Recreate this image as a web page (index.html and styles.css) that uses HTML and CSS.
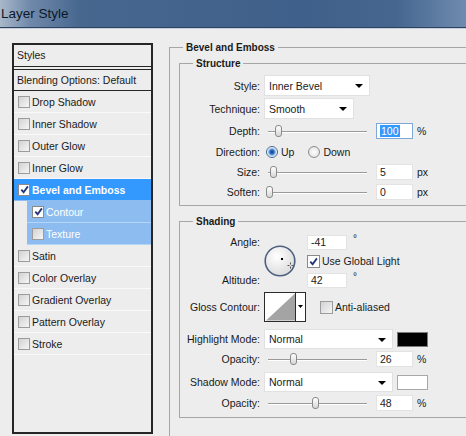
FILE: index.html
```html
<!DOCTYPE html>
<html lang="en">
<head>
<meta charset="utf-8" />
<title>Layer Style</title>
<link rel="stylesheet" href="styles.css">
</head>
<body>
  <div class="titlebar">Layer Style</div>

  <div class="dialog">
    <!-- left list of effects -->
    <div class="styles-panel">
      <div class="panel-head">Styles</div>
      <ul class="style-list">
        <li class="blend">Blending Options: Default</li>
        <li><span class="check"></span>Drop Shadow</li>
        <li><span class="check"></span>Inner Shadow</li>
        <li><span class="check"></span>Outer Glow</li>
        <li><span class="check"></span>Inner Glow</li>
        <li class="active"><span class="check on"><svg width="9" height="9" viewBox="0 0 9 9"><path d="M1.3 4.6 L3.6 7.2 L7.9 1.4" fill="none" stroke="#24367a" stroke-width="1.8"/></svg></span>Bevel and Emboss</li>
        <li class="sub"><span class="check on"><svg width="9" height="9" viewBox="0 0 9 9"><path d="M1.3 4.6 L3.6 7.2 L7.9 1.4" fill="none" stroke="#24367a" stroke-width="1.8"/></svg></span>Contour</li>
        <li class="sub"><span class="check"></span>Texture</li>
        <li><span class="check"></span>Satin</li>
        <li><span class="check"></span>Color Overlay</li>
        <li><span class="check"></span>Gradient Overlay</li>
        <li><span class="check"></span>Pattern Overlay</li>
        <li><span class="check"></span>Stroke</li>
      </ul>
    </div>

    <!-- settings of the selected effect -->
    <div class="settings">
      <fieldset class="group outer">
        <legend>Bevel and Emboss</legend>

        <fieldset class="group structure">
          <legend>Structure</legend>
          <div class="row h23">
            <span class="label">Style:</span>
            <div class="select w-style">Inner Bevel<i class="arrow"></i></div>
          </div>
          <div class="row h23">
            <span class="label">Technique:</span>
            <div class="select w-tech">Smooth<i class="arrow"></i></div>
          </div>
          <div class="row h22">
            <span class="label">Depth:</span>
            <div class="slider"><span class="thumb" style="left:10px"></span></div>
            <div class="num focus"><span class="sel">100</span></div>
            <span class="unit">%</span>
          </div>
          <div class="row h20">
            <span class="label">Direction:</span>
            <span class="radio on"></span><span class="radio-text">Up</span>
            <span class="radio second"></span><span class="radio-text">Down</span>
          </div>
          <div class="row h20">
            <span class="label">Size:</span>
            <div class="slider"><span class="thumb" style="left:5px"></span></div>
            <div class="num">5</div>
            <span class="unit">px</span>
          </div>
          <div class="row h20">
            <span class="label">Soften:</span>
            <div class="slider"><span class="thumb" style="left:1px"></span></div>
            <div class="num">0</div>
            <span class="unit">px</span>
          </div>
        </fieldset>

        <fieldset class="group shading">
          <legend>Shading</legend>
          <div class="angle-grid">
            <span class="label a-angle">Angle:</span>
            <svg class="dial" width="32" height="32" viewBox="0 0 32 32">
              <defs>
                <radialGradient id="dialFill" cx="40%" cy="35%" r="70%">
                  <stop offset="0" stop-color="#ffffff"/>
                  <stop offset="1" stop-color="#dadada"/>
                </radialGradient>
              </defs>
              <circle cx="16" cy="16" r="14.8" fill="url(#dialFill)" stroke="#4e5f80" stroke-width="1.6"/>
              <rect x="17" y="13" width="2" height="2" fill="#000"/>
              <path d="M23.5 20.5h2 M27.5 20.5h2 M26.5 17.5v2 M26.5 21.5v2" stroke="#555" stroke-width="1"/>
            </svg>
            <div class="field a-angle-val"><div class="num short">-41</div><span class="deg">°</span></div>
            <div class="field a-global"><span class="check on"><svg width="9" height="9" viewBox="0 0 9 9"><path d="M1.3 4.6 L3.6 7.2 L7.9 1.4" fill="none" stroke="#24367a" stroke-width="1.8"/></svg></span>Use Global Light</div>
            <span class="label a-alt">Altitude:</span>
            <div class="field a-alt-val"><div class="num short">42</div><span class="deg">°</span></div>
          </div>

          <div class="row gloss">
            <span class="label">Gloss Contour:</span>
            <svg class="contour" width="42" height="30" viewBox="0 0 42 30">
              <rect x="0.5" y="0.5" width="41" height="29" fill="#fff" stroke="#2b2b2b"/>
              <polygon points="2,28.5 31,1.5 31,28.5" fill="#a4a4a4"/>
              <line x1="31.5" y1="1" x2="31.5" y2="29" stroke="#2b2b2b"/>
              <polygon points="34,13 39,13 36.5,16" fill="#000"/>
            </svg>
            <span class="check aa"></span><span>Anti-aliased</span>
          </div>

          <div class="row h22 mode-hi">
            <span class="label">Highlight Mode:</span>
            <div class="select w-mode">Normal<i class="arrow"></i></div>
            <span class="swatch black"></span>
          </div>
          <div class="row h18">
            <span class="label">Opacity:</span>
            <div class="slider"><span class="thumb" style="left:25px"></span></div>
            <div class="num">26</div>
            <span class="unit">%</span>
          </div>
          <div class="row h22 mode-sh">
            <span class="label">Shadow Mode:</span>
            <div class="select w-mode">Normal<i class="arrow"></i></div>
            <span class="swatch white"></span>
          </div>
          <div class="row h18 last">
            <span class="label">Opacity:</span>
            <div class="slider"><span class="thumb" style="left:47px"></span></div>
            <div class="num">48</div>
            <span class="unit">%</span>
          </div>
        </fieldset>
      </fieldset>
    </div>
  </div>
</body>
</html>
```

FILE: styles.css
```css
* {
  box-sizing: border-box;
}

html,
body {
  margin: 0;
  height: 100%;
}

body {
  background: #ededed;
  font-family: "Liberation Sans", Arial, sans-serif;
  font-size: 10.5px;
  color: #1a1a1a;
  overflow: hidden;
}

.titlebar {
  height: 29px;
  padding-left: 1px;
  font-size: 13.5px;
  line-height: 27px;
  color: #0d1726;
  background: linear-gradient(to right, #a9b8ca 0, #7089aa 30px, #47678f 80px, #3f608a 65%, #46668f 85%, #6f8baf 100%);
  border-bottom: 1px solid #c6d0dc;
  box-shadow: inset 0 -1px 0 #2d4260;
}

/* the dialog is cropped on the right and bottom */
.dialog {
  display: flex;
  align-items: flex-start;
  height: calc(100% - 29px);
  overflow: hidden;
}

/* left list */
.styles-panel {
  flex: none;
  width: 141px;
  height: 391px;
  margin: 14px 0 0 12px;
  border: 2px solid #262626;
}

.panel-head {
  height: 22px;
  line-height: 20px;
  padding-left: 3px;
  border-bottom: 1px solid #262626;
}

.style-list {
  list-style: none;
  margin: 2px 0 0;
  padding: 0;
  border-top: 1px solid #262626;
}

.style-list li {
  display: flex;
  align-items: center;
  height: 22px;
  padding-left: 4px;
  border-bottom: 1px solid #f9f9f9;
}

.style-list li.blend {
  height: 21px;
  padding-left: 3px;
  border-bottom: 1px solid #262626;
}

.style-list li.active {
  background: #3399fe;
  color: #fff;
  font-weight: bold;
  border-bottom-color: #8fbdf1;
}

.style-list li.sub {
  margin-left: 13px;
  padding-left: 5px;
  background: #8dbdf0;
  color: #fff;
  border-bottom-color: #b5d5f6;
}

.check {
  flex: none;
  display: inline-flex;
  align-items: center;
  justify-content: center;
  width: 12px;
  height: 12px;
  margin-right: 2px;
  border: 1px solid #9c9c9c;
  background: linear-gradient(135deg, #d2d2d2, #f6f6f6);
}

.check.on {
  background: #fff;
  border-color: #8a8a8a;
}

/* right settings */
.settings {
  flex: 1;
  min-width: 0;
  margin: 12px 0 0 16px;
}

.group {
  margin: 0;
  padding: 0;
  min-width: 0;
  border: 1px solid #a6a6a6;
}

.group legend {
  margin-left: 13px;
  padding: 0 3px;
  font-size: 10px;
  font-weight: bold;
  line-height: 13px;
}

.outer {
  width: 330px;
  height: 420px;
  padding-top: 3px;
}

.outer .group {
  width: 310px;
  margin-left: 9px;
}

.structure {
  padding: 4px 0 3px;
}

.shading {
  margin-top: 9px;
  padding: 6px 0 5px;
}

.row {
  display: flex;
  align-items: center;
}

.h23 { height: 23px; }
.h22 { height: 22px; }
.h20 { height: 20px; }
.h18 { height: 18px; }

.label {
  flex: none;
  width: 84px;
  padding-right: 4px;
  text-align: right;
}

.select {
  display: flex;
  align-items: center;
  height: 21px;
  padding-left: 4px;
  background: #fff;
  border: 1px solid #e1e1e1;
  position: relative;
}

.w-style { width: 106px; }
.w-tech { width: 90px; }
.w-mode { width: 129px; height: 20px; }

.arrow {
  position: absolute;
  right: 6px;
  top: 8px;
  border-left: 4px solid transparent;
  border-right: 4px solid transparent;
  border-top: 4px solid #000;
}

.slider {
  flex: none;
  position: relative;
  width: 99px;
  height: 12px;
  margin-left: 4px;
}

.slider::before {
  content: "";
  position: absolute;
  left: 0;
  right: 0;
  top: 6px;
  height: 1px;
  background: #9a9a9a;
  box-shadow: 0 1px 0 #fff;
}

.thumb {
  position: absolute;
  top: 0;
  width: 7px;
  height: 12px;
  margin-left: -3px;
  border: 1px solid #8a8a8a;
  border-radius: 3px;
  background: linear-gradient(#ffffff, #d6d6d6);
}

.num {
  flex: none;
  width: 37px;
  height: 16px;
  margin-left: 9px;
  padding-left: 3px;
  line-height: 14px;
  background: #fff;
  border: 1px solid #e3e3e3;
}

.num.focus {
  border-color: #7fa8d8;
}

.sel {
  background: #3399ff;
  color: #fff;
  padding: 0 1px;
}

.num.short {
  width: 40px;
  height: 15px;
  margin-left: 0;
  line-height: 13px;
}

.unit {
  margin-left: 4px;
}

.radio {
  flex: none;
  width: 12px;
  height: 12px;
  margin-left: 2px;
  border-radius: 50%;
  border: 1px solid #8e8e8e;
  background: radial-gradient(circle, #ffffff 0, #dadada 100%);
}

.radio.on {
  border-color: #48678f;
  background: radial-gradient(circle, #163f7a 0, #2a6cc0 2px, #9cc3ec 3.5px, #ffffff 5px);
}

.radio.second {
  margin-left: 14px;
}

.radio-text {
  margin-left: 3px;
}

/* angle / altitude block */
.angle-grid {
  display: grid;
  grid-template-columns: 84px 43px 1fr;
  grid-template-rows: 16px 18px 16px;
  row-gap: 2px;
  align-items: center;
}

.dial {
  grid-column: 2;
  grid-row: 1 / 4;
}

.a-angle { grid-column: 1; grid-row: 1; }
.a-angle-val { grid-column: 3; grid-row: 1; }
.a-global { grid-column: 3; grid-row: 2; }
.a-alt { grid-column: 1; grid-row: 3; }
.a-alt-val { grid-column: 3; grid-row: 3; }

.field {
  display: flex;
  align-items: center;
}

.deg {
  align-self: flex-start;
  margin-left: 6px;
  font-size: 10px;
  line-height: 8px;
}

.a-global .check {
  width: 13px;
  height: 13px;
}

.gloss {
  height: 30px;
  margin-top: 4px;
}

.check.aa {
  width: 13px;
  height: 13px;
  margin-left: 14px;
}

.mode-hi {
  margin-top: 6px;
}

.mode-sh {
  margin-top: 3px;
}

.last {
  margin-top: 1px;
}

.swatch {
  width: 31px;
  height: 15px;
  margin-left: 4px;
  border: 1px solid #7a7a7a;
}

.swatch.black {
  background: #000;
}

.swatch.white {
  background: #fff;
  border-color: #a8a8a8;
}
```
